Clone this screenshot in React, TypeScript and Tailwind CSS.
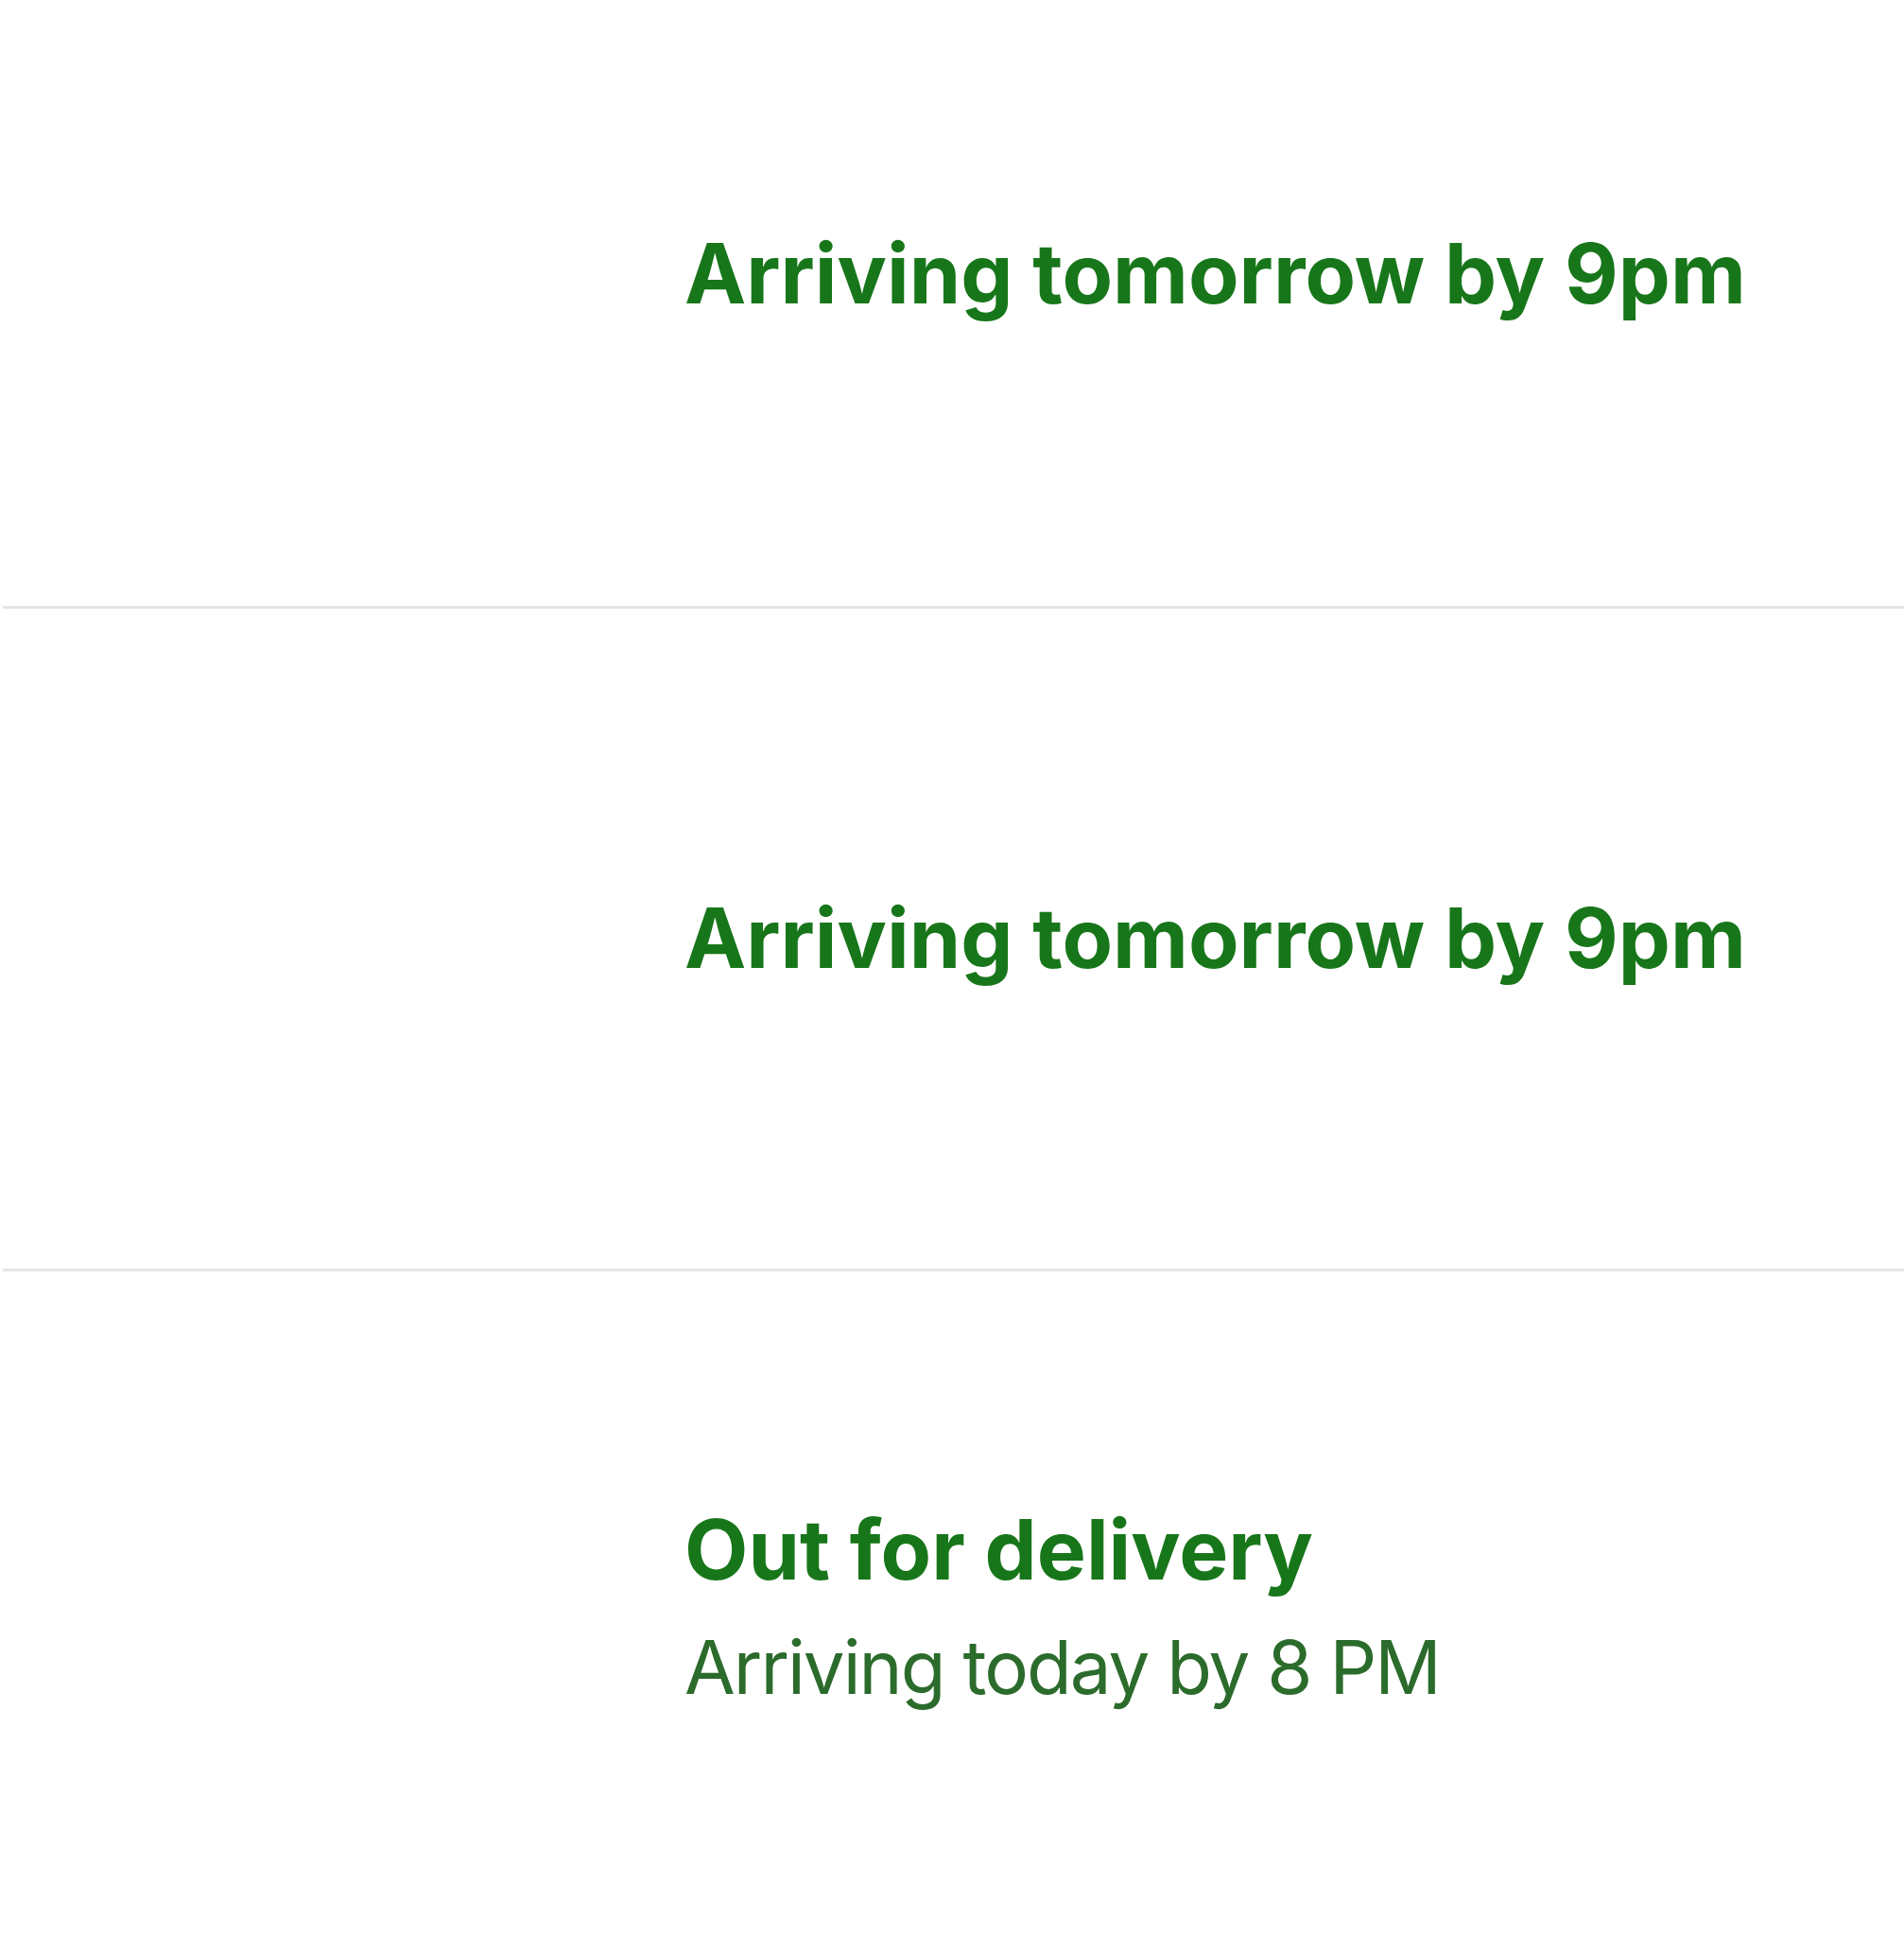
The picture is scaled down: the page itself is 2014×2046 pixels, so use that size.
export default function App() {
  const font = { fontFamily: 'Inter, "Open Sans", sans-serif' };
  return (
    <div className="w-[2014px] h-[2046px] bg-white overflow-hidden" style={font}>
      <section className="h-[641px] pl-[724px] pt-[246px]">
        <p className="text-[87.5px] leading-none font-bold text-[#18761a] whitespace-nowrap">
          Arriving tomorrow by 9pm
        </p>
      </section>
      <div className="h-[3px] ml-[3px] bg-[#e5e5e5]" />
      <section className="h-[698px] pl-[724px] pt-[305px]">
        <p className="text-[87.5px] leading-none font-bold text-[#18761a] whitespace-nowrap">
          Arriving tomorrow by 9pm
        </p>
      </section>
      <div className="h-[3px] ml-[3px] bg-[#e5e5e5]" />
      <section className="pl-[724px] pt-[251px]">
        <p className="text-[87.5px] leading-none font-bold text-[#18761a] whitespace-nowrap">
          Out for delivery
        </p>
        <p className="mt-[41px] text-[78px] tracking-[-2px] leading-none font-normal text-[#2b6b2b] whitespace-nowrap">
          Arriving today by 8 PM
        </p>
      </section>
    </div>
  );
}
